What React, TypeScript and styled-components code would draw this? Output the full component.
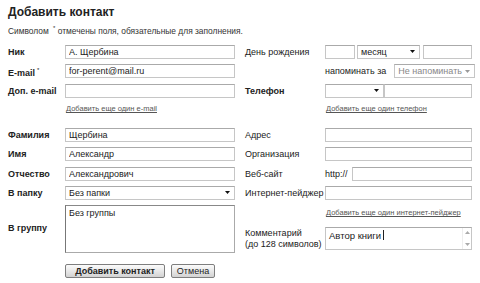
import React from 'react';
import styled, { createGlobalStyle } from 'styled-components';

const GlobalStyle = createGlobalStyle`
    body {
        margin: 0;
        background: #fff;
        font-family: "Liberation Sans", Arial, sans-serif;
        color: #222;
    }
`;

const Page = styled.div`
    padding: 0 8px;
    width: 480px;
    box-sizing: border-box;
`;

const Title = styled.h1`
    margin: 4px 0 0;
    font-size: 12px;
    line-height: 16px;
    font-weight: bold;
    color: #222;
`;

const Note = styled.div`
    margin-top: 2px;
    font-size: 8.4px;
    line-height: 12px;
    color: #333;
`;

const Form = styled.div`
    margin-top: 5px;
    display: flex;
    flex-direction: column;
`;

const Row = styled.div<{ $h: number }>`
    display: grid;
    grid-template-columns: 57px 180px 80px 147px;
    align-items: center;
    height: ${(p) => p.$h}px;
`;

const Spacer = styled.div<{ $h: number }>`
    height: ${(p) => p.$h}px;
`;

const Label = styled.div<{ $bold?: boolean }>`
    font-size: 9px;
    line-height: 12px;
    font-weight: ${(p) => (p.$bold ? 'bold' : 'normal')};
    color: #222;
    white-space: nowrap;
`;

const Star = styled.sup`
    font-size: 6px;
    font-weight: normal;
    margin-left: 2px;
`;

const TextInput = styled.input<{ $w?: number }>`
    box-sizing: border-box;
    width: ${(p) => (p.$w ? `${p.$w}px` : '100%')};
    height: 14px;
    margin: 0;
    padding: 0 3px;
    border: 1px solid #c6c6c6;
    border-top-color: #aaa;
    background: #fff;
    font-family: inherit;
    font-size: 9px;
    color: #222;
    outline: none;
`;

const LeftInput = styled(TextInput)`
    width: 170px;
`;

const SelectBox = styled.div<{ $w: number; $muted?: boolean }>`
    box-sizing: border-box;
    width: ${(p) => p.$w}px;
    height: 14px;
    display: flex;
    align-items: center;
    justify-content: space-between;
    padding: 0 4px 0 3px;
    border: 1px solid #c6c6c6;
    border-top-color: #aaa;
    background: #fff;
    font-size: 9px;
    color: ${(p) => (p.$muted ? '#888' : '#222')};
    flex-shrink: 0;
`;

const Controls = styled.div<{ $gap?: number }>`
    display: flex;
    align-items: center;
    gap: ${(p) => p.$gap ?? 0}px;
`;

const InlineText = styled.span`
    font-size: 9px;
    color: #222;
    white-space: nowrap;
`;

const Link = styled.a`
    font-size: 7.5px;
    color: #555;
    text-decoration: underline;
    white-space: nowrap;
`;

const LinkCell = styled.div<{ $col: number }>`
    grid-column: ${(p) => p.$col};
    display: flex;
    align-items: center;
    padding-left: 1px;
`;

const BottomSection = styled.div`
    display: grid;
    grid-template-columns: 57px 180px 80px 147px;
`;

const GroupLabel = styled(Label)`
    align-self: center;
`;

const GroupBox = styled.div`
    box-sizing: border-box;
    width: 170px;
    height: 48px;
    margin-top: 3px;
    padding: 2px 3px;
    border: 1px solid #aaa;
    border-left-color: #777;
    border-top-color: #888;
    font-size: 9px;
    color: #222;
`;

const RightStack = styled.div`
    grid-column: 3 / span 2;
    display: grid;
    grid-template-columns: 80px 147px;
    grid-template-rows: 21px 31px;
    align-items: center;
`;

const CommentLabel = styled(Label)`
    line-height: 11px;
`;

const CommentBox = styled.div`
    box-sizing: border-box;
    height: 23px;
    display: flex;
    border: 1px solid #c6c6c6;
    border-top-color: #aaa;
    background: #fff;
`;

const CommentText = styled.div`
    flex: 1;
    padding: 2px 3px;
    font-size: 9.5px;
    color: #222;
`;

const Caret = styled.span`
    display: inline-block;
    width: 1px;
    height: 10px;
    margin-left: 2px;
    vertical-align: -1px;
    background: #222;
`;

const ScrollBar = styled.div`
    width: 9px;
    display: flex;
    flex-direction: column;
    justify-content: space-between;
    align-items: center;
    padding: 3px 0;
    box-sizing: border-box;
    border-left: 1px solid #eee;
`;

const Buttons = styled.div`
    display: flex;
    gap: 6px;
    margin-top: 10px;
    padding-left: 57px;
`;

const Button = styled.button<{ $w: number; $primary?: boolean }>`
    box-sizing: border-box;
    width: ${(p) => p.$w}px;
    height: 14px;
    padding: 0;
    border: 1px solid #7e7e7e;
    border-radius: 2px;
    background: linear-gradient(#fbfbfb, #e6e6e6 55%, #d2d2d2);
    font-family: inherit;
    font-size: 9px;
    line-height: 12px;
    font-weight: ${(p) => (p.$primary ? 'bold' : 'normal')};
    color: #222;
`;

const Arrow: React.FC<{ color?: string; up?: boolean }> = ({ color = '#111', up }) => (
    <svg width="5" height="3" viewBox="0 0 5 3">
        <path d={up ? 'M0 3 L2.5 0 L5 3 Z' : 'M0 0 L5 0 L2.5 3 Z'} fill={color} />
    </svg>
);

const App: React.FC = () => {
    return (
        <Page>
            <GlobalStyle />
            <Title>Добавить контакт</Title>
            <Note>Символом <Star>*</Star> отмечены поля, обязательные для заполнения.</Note>
            <Form>
                <Row $h={19.5}>
                    <Label $bold>Ник</Label>
                    <LeftInput readOnly value="А. Щербина" />
                    <Label>День рождения</Label>
                    <Controls>
                        <TextInput readOnly $w={30} value="" />
                        <SelectBox $w={63} style={{ marginLeft: 2 }}>
                            месяц <Arrow />
                        </SelectBox>
                        <TextInput readOnly $w={49} style={{ marginLeft: 3 }} value="" />
                    </Controls>
                </Row>
                <Row $h={19.5}>
                    <Label $bold>
                        E-mail<Star>*</Star>
                    </Label>
                    <LeftInput readOnly value="for-perent@mail.ru" />
                    <div />
                    <Controls $gap={8}>
                        <InlineText>напоминать за</InlineText>
                        <SelectBox $w={81} $muted>
                            Не напоминать <Arrow color="#999" />
                        </SelectBox>
                    </Controls>
                </Row>
                <Row $h={19.5}>
                    <Label $bold>Доп. e-mail</Label>
                    <LeftInput readOnly value="" />
                    <Label $bold>Телефон</Label>
                    <Controls>
                        <SelectBox $w={59}>
                            <span />
                            <Arrow />
                        </SelectBox>
                        <TextInput readOnly $w={88} value="" />
                    </Controls>
                </Row>
                <Row $h={17}>
                    <LinkCell $col={2}>
                        <Link>Добавить еще один e-mail</Link>
                    </LinkCell>
                    <LinkCell $col={4}>
                        <Link>Добавить еще один телефон</Link>
                    </LinkCell>
                </Row>
                <Spacer $h={8} />
                <Row $h={19.3}>
                    <Label $bold>Фамилия</Label>
                    <LeftInput readOnly value="Щербина" />
                    <Label>Адрес</Label>
                    <TextInput readOnly value="" />
                </Row>
                <Row $h={19.3}>
                    <Label $bold>Имя</Label>
                    <LeftInput readOnly value="Александр" />
                    <Label>Организация</Label>
                    <TextInput readOnly value="" />
                </Row>
                <Row $h={19.3}>
                    <Label $bold>Отчество</Label>
                    <LeftInput readOnly value="Александрович" />
                    <Label>Веб-сайт</Label>
                    <Controls $gap={4}>
                        <InlineText>http://</InlineText>
                        <TextInput readOnly value="" />
                    </Controls>
                </Row>
                <Row $h={19.3}>
                    <Label $bold>В папку</Label>
                    <SelectBox $w={170}>
                        Без папки <Arrow />
                    </SelectBox>
                    <Label>Интернет-пейджер</Label>
                    <TextInput readOnly value="" />
                </Row>
                <BottomSection>
                    <GroupLabel $bold>В группу</GroupLabel>
                    <GroupBox>Без группы</GroupBox>
                    <RightStack>
                        <LinkCell $col={2}>
                            <Link>Добавить еще один интернет-пейджер</Link>
                        </LinkCell>
                        <CommentLabel>
                            Комментарий
                            <br />
                            (до 128 символов)
                        </CommentLabel>
                        <CommentBox>
                            <CommentText>
                                Автор книги
                                <Caret />
                            </CommentText>
                            <ScrollBar>
                                <Arrow up color="#aaa" />
                                <Arrow color="#aaa" />
                            </ScrollBar>
                        </CommentBox>
                    </RightStack>
                </BottomSection>
                <Buttons>
                    <Button $w={100} $primary>Добавить контакт</Button>
                    <Button $w={44}>Отмена</Button>
                </Buttons>
            </Form>
        </Page>
    );
};

export default App;
